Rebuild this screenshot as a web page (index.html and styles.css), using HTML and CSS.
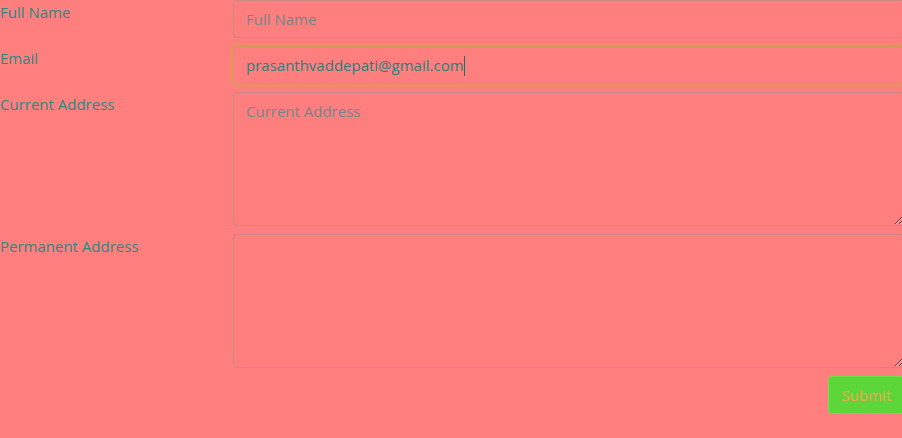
FILE: index.html
```html
<!DOCTYPE html>
<html>
<head>
<meta charset="utf-8">
<link rel="stylesheet" href="styles.css">
</head>
<body>
<form class="form">
  <div class="row">
    <label class="label">Full Name</label>
    <div class="field"><input class="control" type="text" placeholder="Full Name"></div>
  </div>
  <div class="row">
    <label class="label">Email</label>
    <div class="field"><div class="control focused">prasanthvaddepati@gmail.com<span class="caret"></span></div></div>
  </div>
  <div class="row">
    <label class="label">Current Address</label>
    <div class="field"><textarea class="control area" placeholder="Current Address"></textarea></div>
  </div>
  <div class="row">
    <label class="label">Permanent Address</label>
    <div class="field"><textarea class="control area"></textarea></div>
  </div>
  <div class="actions">
    <button class="btn" type="button">Submit</button>
  </div>
</form>
</body>
</html>
```
FILE: styles.css
```css
html, body {
  margin: 0;
  padding: 0;
  background: #ff7f7f;
  overflow: hidden;
}
body {
  width: 902px;
  height: 438px;
  font-family: "Open Sans", "Noto Sans", sans-serif;
  font-size: 15px;
  color: #2a8a82;
}
.form {
  display: flex;
  flex-direction: column;
  gap: 8px;
  width: 904px;
}
.row {
  display: grid;
  grid-template-columns: 233px 1fr;
}
.label {
  line-height: 24px;
  color: #2a8a82;
}
.control {
  box-sizing: border-box;
  display: block;
  width: 100%;
  height: 38px;
  margin: 0;
  padding: 6px 12px;
  border: 1px solid #c98888;
  border-radius: 4px;
  background: #ff7f7f;
  font: inherit;
  line-height: 24px;
  color: #2a7f7b;
  outline: none;
}
.control::placeholder {
  color: #73878a;
  opacity: 1;
}
.focused {
  border-color: #cf9a5c;
  box-shadow: 0 0 0 3px #f08c6c;
}
.caret {
  display: inline-block;
  width: 1px;
  height: 20px;
  background: #1e6f6a;
  vertical-align: -5px;
}
.area {
  height: 134px;
  resize: vertical;
}
.actions {
  display: flex;
  justify-content: flex-end;
}
.btn {
  box-sizing: border-box;
  height: 38px;
  padding: 6px 12px;
  border: 1px solid #6ee04a;
  border-radius: 4px;
  background: #5dd63a;
  color: #f5a253;
  font: inherit;
  line-height: 24px;
}
```
